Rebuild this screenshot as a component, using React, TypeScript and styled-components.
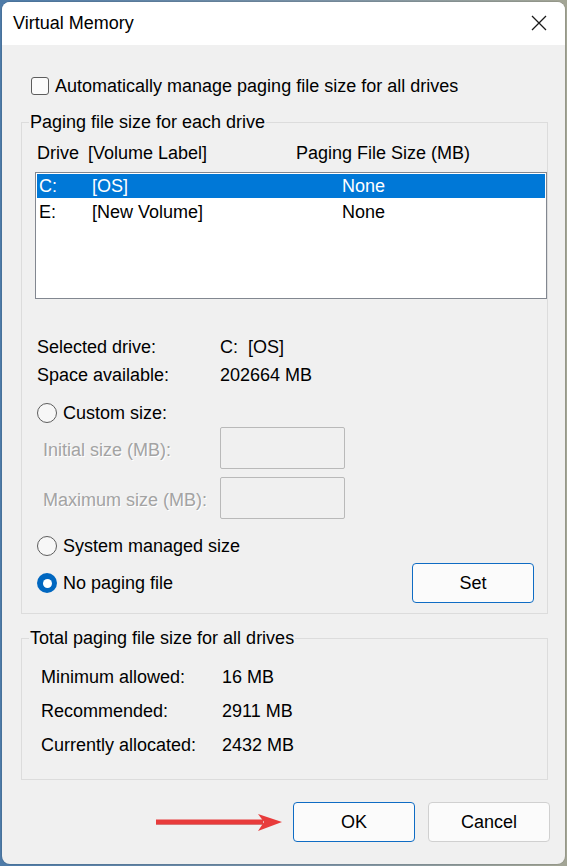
import React, { useState } from 'react';
import styled, { createGlobalStyle } from 'styled-components';

const GlobalStyle = createGlobalStyle`
  html, body {
    margin: 0;
    padding: 0;
  }
  body {
    width: 567px;
    height: 866px;
    overflow: hidden;
    background: linear-gradient(90deg, #4e7ba8 0%, #7d93a4 60%, #a3a595 100%);
    font-family: "Liberation Sans", Arial, sans-serif;
    font-size: 18px;
    color: #000;
  }
  * {
    box-sizing: border-box;
  }
`;

const Desktop = styled.div`
  width: 567px;
  height: 866px;
  padding: 2px;
`;

const Window = styled.div`
  width: 563px;
  height: 862px;
  border-radius: 8px;
  overflow: hidden;
  background: #f0f0f0;
  display: flex;
  flex-direction: column;
  box-shadow: 0 0 0 1px rgba(0, 0, 0, 0.08);
`;

const TitleBar = styled.div`
  height: 43px;
  flex-shrink: 0;
  background: #ffffff;
  display: flex;
  align-items: center;
  justify-content: space-between;
  padding: 0 18px 2px 11px;
`;

const Title = styled.span`
  font-size: 18px;
  line-height: 20px;
`;

const CloseButton = styled.button`
  width: 16px;
  height: 16px;
  padding: 0;
  border: none;
  background: none;
  display: flex;
  align-items: center;
  justify-content: center;
  cursor: default;
`;

const Body = styled.div`
  flex: 1;
  display: flex;
  flex-direction: column;
  padding: 31px 17px 0 19px;
`;

const CheckRow = styled.label`
  display: flex;
  align-items: center;
  gap: 6px;
  height: 20px;
  padding-left: 10px;
  line-height: 20px;
`;

const CheckBox = styled.span<{ checked: boolean }>`
  width: 18px;
  height: 18px;
  border: 1px solid #5d5d5d;
  border-radius: 3px;
  background: ${p => (p.checked ? '#0067c0' : '#fbfbfb')};
  flex-shrink: 0;
`;

const GroupBox = styled.fieldset<{ padTop: number; padBottom: number }>`
  margin: 16px 0 0 0;
  border: 1px solid #dcdcdc;
  padding: ${p => p.padTop}px 0 ${p => p.padBottom}px 13px;
  min-width: 0;

  & + & {
    margin-top: 14px;
  }
`;

const GroupLegend = styled.legend`
  margin-left: -6px;
  padding: 0 1px;
  line-height: 20px;
  height: 20px;
`;

const ListHeader = styled.div`
  display: grid;
  grid-template-columns: 51px 208px auto;
  padding-left: 2px;
  height: 20px;
  line-height: 20px;
`;

const ListBox = styled.div`
  margin-top: 9px;
  height: 127px;
  border: 1px solid #828790;
  background: #ffffff;
  padding: 1px;
  display: flex;
  flex-direction: column;
  gap: 2px;
`;

const ListRow = styled.div<{ selected: boolean }>`
  display: grid;
  grid-template-columns: 53px 250px auto;
  height: 24px;
  line-height: 24px;
  padding-left: 2px;
  background: ${p => (p.selected ? '#0078d7' : 'transparent')};
  color: ${p => (p.selected ? '#ffffff' : '#000000')};
`;

const InfoGrid = styled.div<{ labelWidth: number; rowGap: number; indent: number }>`
  display: grid;
  grid-template-columns: ${p => p.labelWidth}px auto;
  row-gap: ${p => p.rowGap}px;
  padding-left: ${p => p.indent}px;
  line-height: 20px;
`;

const DriveInfo = styled(InfoGrid)`
  margin-top: 38px;
`;

const RadioRow = styled.label<{ top: number }>`
  display: flex;
  align-items: center;
  gap: 6px;
  height: 20px;
  line-height: 20px;
  margin-top: ${p => p.top}px;
  padding-left: 2px;
`;

const RadioDot = styled.span<{ checked: boolean }>`
  width: 20px;
  height: 20px;
  border-radius: 50%;
  flex-shrink: 0;
  border: ${p => (p.checked ? 'none' : '1px solid #5d5d5d')};
  background: ${p => (p.checked ? '#0067c0' : '#f7f7f7')};
  display: flex;
  align-items: center;
  justify-content: center;

  &::after {
    content: '';
    display: ${p => (p.checked ? 'block' : 'none')};
    width: 9px;
    height: 9px;
    border-radius: 50%;
    background: #ffffff;
  }
`;

const SizeRow = styled.div<{ top: number }>`
  display: grid;
  grid-template-columns: 177px 125px;
  align-items: center;
  margin-top: ${p => p.top}px;
  padding-left: 8px;
`;

const DisabledLabel = styled.span`
  color: #a3a3a3;
  text-shadow: 1px 1px 0 #ffffff;
  line-height: 20px;
  padding-top: 3px;
`;

const SizeInput = styled.input`
  width: 125px;
  height: 42px;
  border: 1px solid #b9b9b9;
  border-radius: 2px;
  background: #f0f0f0;
  font: inherit;
  padding: 0 6px;
`;

const LastRow = styled.div`
  display: flex;
  align-items: center;
  justify-content: space-between;
  margin-top: 7px;
  padding-right: 13px;

  & > label {
    margin-top: 0;
  }
`;

const PushButton = styled.button<{ primary?: boolean }>`
  width: 122px;
  height: 40px;
  border-radius: 4px;
  border: 1px solid ${p => (p.primary ? '#0f6cc4' : '#d0d0d0')};
  background: #fbfbfb;
  font-family: inherit;
  font-size: 18px;
  color: #000;
  padding: 0;
  cursor: default;
`;

const Footer = styled.div`
  display: flex;
  align-items: center;
  justify-content: flex-end;
  gap: 13px;
  margin: 22px -2px 0 0;
`;

const Pointer = styled.svg`
  margin-right: -3px;
`;

const drives = [
  { letter: 'C:', label: '[OS]', size: 'None' },
  { letter: 'E:', label: '[New Volume]', size: 'None' },
];

const totals = [
  ['Minimum allowed:', '16 MB'],
  ['Recommended:', '2911 MB'],
  ['Currently allocated:', '2432 MB'],
];

type SizeMode = 'custom' | 'system' | 'none';

const App: React.FC = () => {
  const [autoManage, setAutoManage] = useState(false);
  const [selected, setSelected] = useState(0);
  const [mode, setMode] = useState<SizeMode>('none');

  const drive = drives[selected];

  return (
    <>
      <GlobalStyle />
      <Desktop>
        <Window>
          <TitleBar>
            <Title>Virtual Memory</Title>
            <CloseButton aria-label="Close">
              <svg width="16" height="16" viewBox="0 0 16 16">
                <path d="M1 1 L15 15 M15 1 L1 15" stroke="#1a1a1a" strokeWidth="1.3" fill="none" />
              </svg>
            </CloseButton>
          </TitleBar>

          <Body>
            <CheckRow onClick={() => setAutoManage(!autoManage)}>
              <CheckBox checked={autoManage} />
              Automatically manage paging file size for all drives
            </CheckRow>

            <GroupBox padTop={11} padBottom={10}>
              <GroupLegend>Paging file size for each drive</GroupLegend>
              <ListHeader>
                <span>Drive</span>
                <span>[Volume Label]</span>
                <span>Paging File Size (MB)</span>
              </ListHeader>
              <ListBox>
                {drives.map((d, i) => (
                  <ListRow key={d.letter} selected={i === selected} onClick={() => setSelected(i)}>
                    <span>{d.letter}</span>
                    <span>{d.label}</span>
                    <span>{d.size}</span>
                  </ListRow>
                ))}
              </ListBox>

              <DriveInfo labelWidth={183} rowGap={8} indent={2}>
                <span>Selected drive:</span>
                <span>{drive.letter}&nbsp;&nbsp;{drive.label}</span>
                <span>Space available:</span>
                <span>202664 MB</span>
              </DriveInfo>

              <RadioRow top={18} onClick={() => setMode('custom')}>
                <RadioDot checked={mode === 'custom'} />
                Custom size:
              </RadioRow>
              <SizeRow top={4}>
                <DisabledLabel>Initial size (MB):</DisabledLabel>
                <SizeInput disabled />
              </SizeRow>
              <SizeRow top={8}>
                <DisabledLabel>Maximum size (MB):</DisabledLabel>
                <SizeInput disabled />
              </SizeRow>

              <RadioRow top={17} onClick={() => setMode('system')}>
                <RadioDot checked={mode === 'system'} />
                System managed size
              </RadioRow>
              <LastRow>
                <RadioRow top={0} onClick={() => setMode('none')}>
                  <RadioDot checked={mode === 'none'} />
                  No paging file
                </RadioRow>
                <PushButton primary>Set</PushButton>
              </LastRow>
            </GroupBox>

            <GroupBox padTop={19} padBottom={24}>
              <GroupLegend>Total paging file size for all drives</GroupLegend>
              <InfoGrid labelWidth={181} rowGap={14} indent={6}>
                {totals.map(([label, value]) => (
                  <React.Fragment key={label}>
                    <span>{label}</span>
                    <span>{value}</span>
                  </React.Fragment>
                ))}
              </InfoGrid>
            </GroupBox>

            <Footer>
              {/* red pointer arrow aimed at the OK button */}
              <Pointer width="128" height="20" viewBox="0 0 128 20">
                <line x1="1" y1="10.5" x2="108" y2="10.5" stroke="#7a3a3a" strokeWidth="5" opacity="0.35" />
                <line x1="1" y1="10" x2="108" y2="10" stroke="#e83b3b" strokeWidth="5" />
                <path d="M103 2 L127 10 L103 19 L109 10 Z" fill="#e83b3b" />
              </Pointer>
              <PushButton primary>OK</PushButton>
              <PushButton>Cancel</PushButton>
            </Footer>
          </Body>
        </Window>
      </Desktop>
    </>
  );
};

export default App;
